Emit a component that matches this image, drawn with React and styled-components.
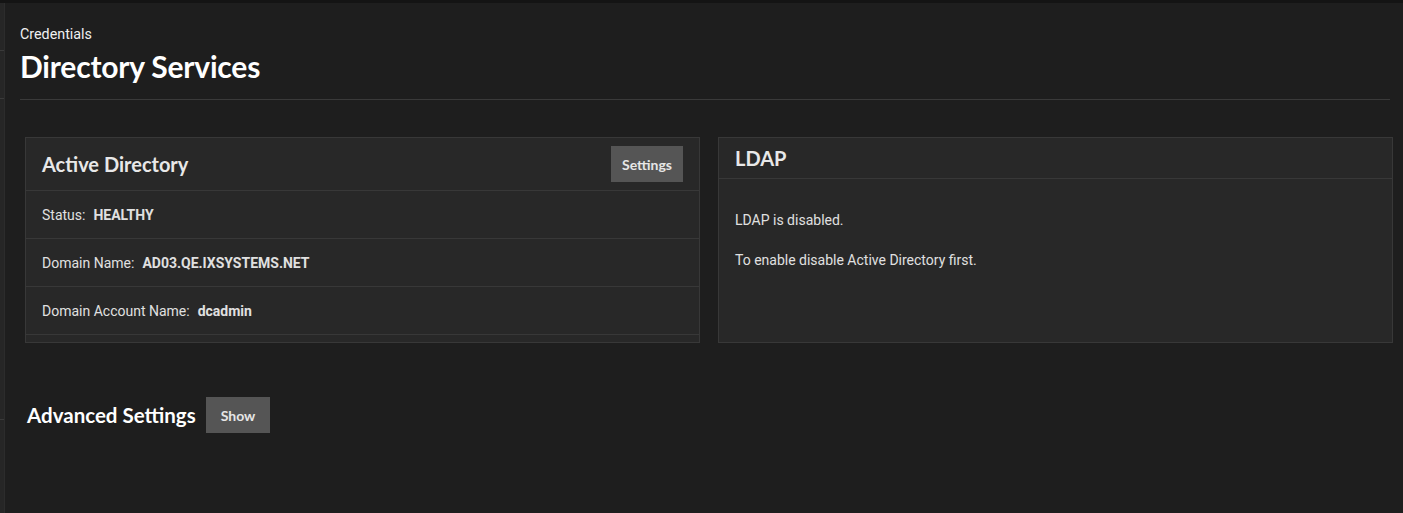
import React from "react";
import styled, { createGlobalStyle } from "styled-components";

const Global = createGlobalStyle`
  html, body { margin: 0; padding: 0; background: #1e1e1e; }
  body { font-family: Roboto, "Liberation Sans", sans-serif; color: #e6e6e6; }
`;

const Shell = styled.div`
  display: flex;
  flex-direction: column;
  height: 513px;
  overflow: hidden;
`;

const TopBar = styled.div`
  height: 3px;
  background: #141414;
  flex: none;
`;

const Body = styled.div`
  flex: 1;
  display: flex;
`;

const SideEdge = styled.div`
  width: 4px;
  background: #262626;
  border-right: 1px solid #2c2c2c;
  flex: none;
  display: flex;
  flex-direction: column;
`;

const EdgeMark = styled.div`
  height: 1px;
  background: #3a3a3a;
  margin-top: ${(p) => p.$top}px;
`;

const Main = styled.main`
  flex: 1;
  min-width: 0;
  padding: 23px 10px 0 15px;
  display: flex;
  flex-direction: column;
`;

const PageHeader = styled.header`
  padding-bottom: 16px;
  border-bottom: 1px solid #3a3a3a;
  margin: 0 3px 37px 0;
`;

const Crumb = styled.div`
  font-size: 14.3px;
  line-height: 17px;
  color: #f0f0f0;
`;

const PageTitle = styled.h1`
  margin: 6px 0 0;
  font-family: Lato, "Open Sans", sans-serif;
  font-weight: 700;
  font-size: 30px;
  line-height: 34px;
  color: #ffffff;
  letter-spacing: -0.2px;
`;

const Cards = styled.div`
  display: grid;
  grid-template-columns: 1fr 1fr;
  gap: 18px;
  margin: 0 0 0 5px;
`;

const Card = styled.section`
  background: #282828;
  border: 1px solid #383838;
  height: 206px;
  box-sizing: border-box;
  overflow: hidden;
  display: flex;
  flex-direction: column;
`;

const CardHead = styled.div`
  display: flex;
  align-items: center;
  justify-content: space-between;
  height: ${(p) => p.$h}px;
  padding: 0 16px;
  border-bottom: 1px solid #383838;
  flex: none;
`;

const CardTitle = styled.h2`
  margin: 0;
  font-family: Lato, "Open Sans", sans-serif;
  font-weight: 700;
  font-size: 20px;
  color: #e8e8e8;
`;

const Button = styled.button`
  background: #555555;
  color: #e6e6e6;
  border: none;
  height: 36px;
  padding: 0 ${(p) => p.$px}px;
  font-family: Lato, "Open Sans", sans-serif;
  font-weight: 700;
  font-size: 14px;
  cursor: pointer;
`;

const Row = styled.div`
  height: 47px;
  flex: none;
  display: flex;
  align-items: center;
  padding: 0 16px;
  border-bottom: 1px solid #383838;
  font-size: 14px;
  color: #e0e0e0;
`;

const Label = styled.span`
  margin-right: 8px;
`;

const Value = styled.span`
  font-weight: 700;
`;

const CardBody = styled.div`
  padding: 33px 16px 0;
  font-size: 14px;
  color: #e0e0e0;
  display: flex;
  flex-direction: column;
  gap: 24px;
`;

const Para = styled.p`
  margin: 0;
  line-height: 16px;
`;

const Advanced = styled.div`
  display: flex;
  align-items: center;
  gap: 10px;
  margin-top: 54px;
  padding-left: 7px;
`;

const AdvTitle = styled.h3`
  margin: 0;
  font-family: Lato, "Open Sans", sans-serif;
  font-weight: 700;
  font-size: 20.5px;
  color: #ffffff;
`;

export default function App() {
  return (
    <>
      <Global />
      <Shell>
        <TopBar />
        <Body>
          <SideEdge>
            <EdgeMark $top={47} />
            <EdgeMark $top={47} />
            <EdgeMark $top={320} />
          </SideEdge>
          <Main>
            <PageHeader>
              <Crumb>Credentials</Crumb>
              <PageTitle>Directory Services</PageTitle>
            </PageHeader>
            <Cards>
              <Card>
                <CardHead $h={52}>
                  <CardTitle>Active Directory</CardTitle>
                  <Button $px={11}>Settings</Button>
                </CardHead>
                <Row>
                  <Label>Status:</Label>
                  <Value>HEALTHY</Value>
                </Row>
                <Row>
                  <Label>Domain Name:</Label>
                  <Value>AD03.QE.IXSYSTEMS.NET</Value>
                </Row>
                <Row>
                  <Label>Domain Account Name:</Label>
                  <Value>dcadmin</Value>
                </Row>
                <Row />
              </Card>
              <Card>
                <CardHead $h={40}>
                  <CardTitle>LDAP</CardTitle>
                </CardHead>
                <CardBody>
                  <Para>LDAP is disabled.</Para>
                  <Para>To enable disable Active Directory first.</Para>
                </CardBody>
              </Card>
            </Cards>
            <Advanced>
              <AdvTitle>Advanced Settings</AdvTitle>
              <Button $px={15}>Show</Button>
            </Advanced>
          </Main>
        </Body>
      </Shell>
    </>
  );
}
